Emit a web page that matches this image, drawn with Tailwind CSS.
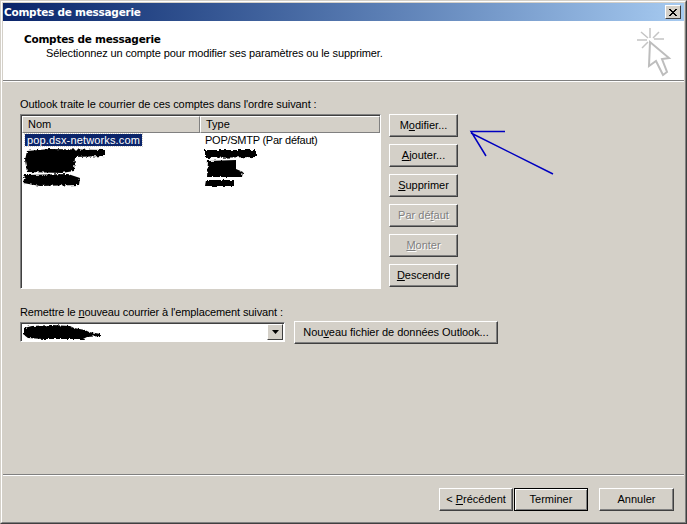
<!DOCTYPE html>
<html>
<head>
<meta charset="utf-8">
<script src="https://cdn.jsdelivr.net/npm/@tailwindcss/browser@4"></script>
</head>
<body class="m-0">
<svg class="absolute h-0 w-0"><filter id="rough" x="-10%" y="-20%" width="120%" height="140%"><feTurbulence type="fractalNoise" baseFrequency="0.35" numOctaves="2" seed="4"/><feDisplacementMap in="SourceGraphic" scale="4"/></filter></svg>
<div class="relative w-[687px] h-[524px] overflow-hidden font-['Liberation_Sans',Arial,sans-serif] text-[11px] leading-[13px] text-black border-t border-l border-r border-b border-t-[#d4d0c8] border-l-[#d4d0c8] border-r-[#404040] border-b-[#404040]">
  <div class="h-full border-t border-l border-r border-b border-t-white border-l-white border-r-[#808080] border-b-[#808080]">
    <div class="flex h-full flex-col border border-[#d4d0c8] bg-[#d4d0c8]">
      <!-- title bar -->
      <div class="flex h-[18px] shrink-0 items-center justify-between bg-gradient-to-r from-[#0a246a] to-[#a6caf0] pl-[1px] pr-[3px]">
        <span class="text-[10.5px] font-bold text-white font-['DejaVu_Sans',sans-serif] tracking-[-0.25px]">Comptes de messagerie</span>
        <span class="flex h-[14px] w-[16px] items-center justify-center border border-t-white border-l-white border-r-[#404040] border-b-[#404040] bg-[#d4d0c8]">
          <svg width="8" height="7" viewBox="0 0 8 7"><path d="M0 0l7 7M1 0l7 7M7 0l-7 7M8 0l-7 7" stroke="#000" stroke-width="1" fill="none"/></svg>
        </span>
      </div>
      <!-- header -->
      <div class="flex h-[59px] shrink-0 justify-between bg-white">
        <div class="pl-[21px] pt-[12px]">
          <div class="text-[10.5px] font-bold font-['DejaVu_Sans',sans-serif] tracking-[-0.25px]">Comptes de messagerie</div>
          <div class="mt-[1px] pl-[22px] tracking-[-0.12px]">Sélectionnez un compte pour modifier ses paramètres ou le supprimer.</div>
        </div>
        <svg class="mr-[12px] mt-[4px]" width="36" height="52" viewBox="636 25 36 52">
          <path d="M650 28v10M637 40h10M654 39h10M641 32l7 6M659 32l-6 6M642 48l6-6" stroke="#c4c4c4" stroke-width="1.500" fill="none"/>
          <path d="M650 42L649 66L656 61L663 75L667 72L662 59L669 58Z" fill="#fff" stroke="#bdbdbd" stroke-width="2"/>
        </svg>
      </div>
      <div class="h-[2px] shrink-0 border-t border-t-[#808080] border-b border-b-white"></div>
      <!-- main -->
      <div class="flex-1 pl-[17px] pt-[16px]">
        <div class="h-[14px] tracking-[-0.08px]">Outlook traite le courrier de ces comptes dans l'ordre suivant :</div>
        <div class="flex mt-[2px] gap-[8px]">
          <!-- list -->
          <div class="relative h-[175px] w-[361px] border border-t-[#808080] border-l-[#808080] border-r-white border-b-white bg-white shadow-[inset_1px_1px_0_#404040]">
            <div class="ml-px mt-px flex h-[17px] bg-[#d4d0c8]">
              <div class="flex w-[178px] items-center border border-t-white border-l-white border-r-[#808080] border-b-[#808080] pl-[5px]">Nom</div>
              <div class="flex flex-1 items-center border border-t-white border-l-white border-r-[#808080] border-b-[#808080] pl-[5px]">Type</div>
            </div>
            <div class="flex h-[14px] items-center">
              <span class="ml-[4px] w-[180px]"><span class="inline-block bg-[#0a246a] px-[2px] tracking-[0.15px] text-white outline-1 outline-dotted outline-[#d4d0c8] leading-[12px]">pop.dsx-networks.com</span></span>
              <span class="tracking-[-0.25px]">POP/SMTP (Par défaut)</span>
            </div>
            <svg class="absolute left-0 top-[30px]" width="250" height="48" viewBox="21 145 250 48">
              <g fill="#000" filter="url(#rough)">
                <path d="M27 151L50 149L105 150L105 156L75 157L74 171L62 173L27 172L25 160Z"/>
                <path d="M25 175L68 174L80 178L79 185L40 186L23 183Z"/>
                <path d="M205 150L256 150L256 157L205 158Z"/>
                <path d="M208 161L236 160L236 169L243 172L242 177L207 177Z"/>
                <path d="M206 180L235 180L235 186L205 186Z"/>
              </g>
            </svg>
          </div>
          <!-- buttons -->
          <div class="flex w-[69px] flex-col gap-[7px]">
            <button class="h-[23px] border border-t-white border-l-white border-r-[#404040] border-b-[#404040] bg-[#d4d0c8] shadow-[inset_-1px_-1px_0_#808080]">M<u>o</u>difier...</button>
            <button class="h-[23px] border border-t-white border-l-white border-r-[#404040] border-b-[#404040] bg-[#d4d0c8] shadow-[inset_-1px_-1px_0_#808080]"><u>A</u>jouter...</button>
            <button class="h-[23px] border border-t-white border-l-white border-r-[#404040] border-b-[#404040] bg-[#d4d0c8] shadow-[inset_-1px_-1px_0_#808080]"><u>S</u>upprimer</button>
            <button class="h-[23px] border border-t-white border-l-white border-r-[#404040] border-b-[#404040] bg-[#d4d0c8] text-[#808080] shadow-[inset_-1px_-1px_0_#808080] [text-shadow:1px_1px_0_#fff]">Par dé<u>f</u>aut</button>
            <button class="h-[23px] border border-t-white border-l-white border-r-[#404040] border-b-[#404040] bg-[#d4d0c8] text-[#808080] shadow-[inset_-1px_-1px_0_#808080] [text-shadow:1px_1px_0_#fff]"><u>M</u>onter</button>
            <button class="h-[23px] border border-t-white border-l-white border-r-[#404040] border-b-[#404040] bg-[#d4d0c8] shadow-[inset_-1px_-1px_0_#808080]"><u>D</u>escendre</button>
          </div>
        </div>
        <div class="mt-[17px] h-[14px] tracking-[-0.12px]">Remettre le <u>n</u>ouveau courrier à l'emplacement suivant :</div>
        <div class="flex mt-[1px] items-start gap-[9px]">
          <div class="relative mt-[1px] flex h-[20px] w-[265px] items-center justify-end border border-t-[#808080] border-l-[#808080] border-r-white border-b-white bg-white shadow-[inset_1px_1px_0_#404040]">
            <svg class="absolute left-[2px] top-[1px]" width="82" height="16" viewBox="0 0 82 16"><path d="M1 4L9 2L29 1L47 2L51 4L62 6L66 8L78 10L78 12L64 13L60 15L20 15L5 14L1 11Z" fill="#000" filter="url(#rough)"/></svg>
            <span class="mr-px flex h-[16px] w-[16px] items-center justify-center border border-t-white border-l-white border-r-[#404040] border-b-[#404040] bg-[#d4d0c8]">
              <svg width="7" height="4" viewBox="0 0 7 4"><path d="M0 0h7L3.500 4z" fill="#000"/></svg>
            </span>
          </div>
          <button class="h-[23px] w-[204px] border border-t-white border-l-white border-r-[#404040] border-b-[#404040] bg-[#d4d0c8] tracking-[-0.05px] shadow-[inset_-1px_-1px_0_#808080]">Nou<u>v</u>eau fichier de données Outlook...</button>
        </div>
      </div>
      <!-- footer -->
      <div class="h-[2px] shrink-0 border-t border-t-[#808080] border-b border-b-white"></div>
      <div class="flex h-[45px] shrink-0 items-start justify-end pr-[10px] pt-[12px]">
        <button class="h-[23px] w-[74px] border border-t-white border-l-white border-r-[#404040] border-b-[#404040] bg-[#d4d0c8] shadow-[inset_-1px_-1px_0_#808080]">&lt; <u>P</u>récédent</button>
        <button class="ml-px h-[23px] w-[74px] border border-black bg-[#d4d0c8] shadow-[inset_1px_1px_0_#fff,inset_-1px_-1px_0_#808080]">Terminer</button>
        <button class="ml-[11px] h-[23px] w-[75px] border border-t-white border-l-white border-r-[#404040] border-b-[#404040] bg-[#d4d0c8] shadow-[inset_-1px_-1px_0_#808080]">Annuler</button>
      </div>
    </div>
  </div>
  <svg class="absolute left-[459px] top-[119px]" width="100" height="60" viewBox="460 120 100 60">
    <path d="M505 131.500H471L486 156M471 133L553 174" stroke="#0000c0" stroke-width="1.500" fill="none"/>
  </svg>
</div>
</body>
</html>
